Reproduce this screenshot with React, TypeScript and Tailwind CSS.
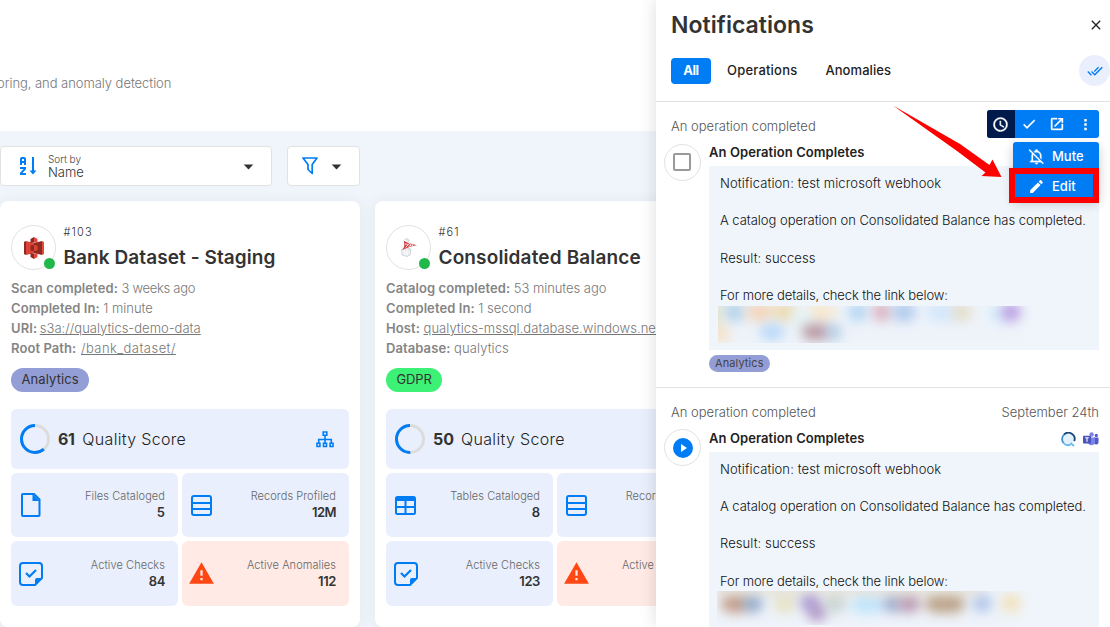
import type { ReactNode } from "react";

function Icon({ d, className, box = "0 0 24 24" }: { d: string; className: string; box?: string }) {
  return (
    <svg viewBox={box} className={`shrink-0 ${className}`} fill="currentColor">
      <path fillRule="evenodd" d={d} />
    </svg>
  );
}

const paths = {
  caret: "M7 10l5 5 5-5z",
  check: "M21 7 9 19l-5.5-5.5 1.41-1.41L9 16.17 19.59 5.59 21 7z",
  clock: "M12 20a8 8 0 0 0 8-8 8 8 0 0 0-8-8 8 8 0 0 0-8 8 8 8 0 0 0 8 8m0-18a10 10 0 0 1 10 10 10 10 0 0 1-10 10C6.47 22 2 17.5 2 12A10 10 0 0 1 12 2m.5 5v5.25l4.5 2.67-.75 1.23L11 13V7h1.5z",
  open: "M14 3v2h3.59l-9.83 9.83 1.41 1.41L19 6.41V10h2V3m-2 16H5V5h7V3H5a2 2 0 0 0-2 2v14a2 2 0 0 0 2 2h14a2 2 0 0 0 2-2v-7h-2v7z",
  dots: "M10 3h4v4h-4zM10 10h4v4h-4zM10 17h4v4h-4z",
  bellOff: "M22.11 21.46 2.39 1.73 1.11 3l4.72 4.72A6.9 6.9 0 0 0 5 11v6l-2 2v1h15.11l2.73 2.73 1.27-1.27M7 18v-7c0-.61.11-1.21.34-1.77L16.11 18H7m3 3h4a2 2 0 0 1-2 2 2 2 0 0 1-2-2M8.29 5.09c.53-.34 1.11-.59 1.71-.79V4a2 2 0 0 1 2-2 2 2 0 0 1 2 2v.29c2.97.88 5 3.61 5 6.71v4.8l-2-2V11a5 5 0 0 0-5-5c-.78 0-1.55.2-2.24.56L8.29 5.09z",
  pencil: "M20.71 7.04c.39-.39.39-1.04 0-1.41l-2.34-2.34c-.37-.39-1.02-.39-1.41 0l-1.84 1.83 3.75 3.75M3 17.25V21h3.75L17.81 9.93l-3.75-3.75L3 17.25z",
  close: "M19 6.41 17.59 5 12 10.59 6.41 5 5 6.41 10.59 12 5 17.59 6.41 19 12 13.41 17.59 19 19 17.59 13.41 12z",
  checkAll: "M.41 13.41 6 19l1.41-1.42L1.83 12m20.41-6.42L11.66 16.17 7.5 12l-1.43 1.41L11.66 19l12-12M18 7l-1.41-1.42-6.35 6.35 1.42 1.41L18 7z",
  alert: "M13 14h-2V9h2m0 9h-2v-2h2M1 21h22L12 2 1 21z",
};

function SortIcon() {
  return (
    <svg viewBox="0 0 17 18" className="h-[18px] w-[17px] shrink-0" fill="none" stroke="#007cf5" strokeWidth="2">
      <path d="M1 8V2a1 1 0 0 1 1-1h2a1 1 0 0 1 1 1v6M1 5h4" />
      <path d="M0 11h5v.8L1 16.200V17h5" strokeWidth="1.900" />
      <path d="M13 0v15" />
      <path d="M9.500 13.500h7L13 17.500z" fill="#007cf5" stroke="none" />
    </svg>
  );
}

function FilterIcon() {
  return (
    <svg viewBox="0 0 16 18" className="h-[18px] w-4 shrink-0" fill="none" stroke="#007cf5" strokeWidth="1.700">
      <path d="M1 1h14L10.200 7.500v9L6 12.500v-5z" strokeLinejoin="round" />
    </svg>
  );
}

function FileIcon() {
  return (
    <svg viewBox="0 0 20 24" className="h-6 w-5" fill="none" stroke="#007cf5" strokeWidth="2">
      <path d="M2 1h11l5.500 5.500V22a1 1 0 0 1-1 1H2a1 1 0 0 1-1-1V2a1 1 0 0 1 1-1z" strokeLinejoin="round" />
      <path d="M11.500 1v7h7z" fill="#007cf5" stroke="none" />
    </svg>
  );
}

function RowsIcon() {
  return (
    <svg viewBox="0 0 21 21" className="size-[21px]" fill="none" stroke="#007cf5" strokeWidth="2">
      <rect x="1" y="1" width="19" height="19" rx="2" />
      <path d="M1 8h19M1 14h19" />
    </svg>
  );
}

function TableIcon() {
  return (
    <svg viewBox="0 0 21 19" className="h-[19px] w-[21px]" fill="none" stroke="#007cf5" strokeWidth="2">
      <rect x="1" y="1" width="19" height="17" rx="1.500" />
      <path d="M1 11h19M10.500 4v14" />
      <path d="M1 3h19" strokeWidth="4" />
    </svg>
  );
}

function NoteCheckIcon() {
  return (
    <svg viewBox="0 0 24 24" className="size-6" fill="none" stroke="#007cf5" strokeWidth="2">
      <path d="M16 23H4a3 3 0 0 1-3-3V4a3 3 0 0 1 3-3h16a3 3 0 0 1 3 3v12z" strokeLinejoin="round" />
      <path d="M16 23v-5a2 2 0 0 1 2-2h5z" fill="#007cf5" stroke="none" />
      <path d="M7 11l3.500 3.500L17 8" strokeWidth="2.200" />
    </svg>
  );
}

function SitemapIcon() {
  return (
    <svg viewBox="0 0 18 17" className="h-[17px] w-[18px]" fill="none" stroke="#007cf5" strokeWidth="1.600">
      <path d="M7.200 1h3.600v3.300H7.200zM1 12.200h2.900v3.300H1zM7.500 12.200h3v3.300h-3zM14.100 12.200H17v3.300h-2.900zM9 4.500V12M2.700 12V8.500h12.600V12" />
    </svg>
  );
}

function S3Icon() {
  return (
    <svg viewBox="0 0 20 22" className="h-[22px] w-5">
      <path d="M0 5l2-1v14l-2-1z" fill="#8c2a20" />
      <path d="M2 4l8 2v10l-8 2z" fill="#dd4237" />
      <path d="M20 5l-2-1v14l2-1z" fill="#e04a3d" />
      <path d="M18 4l-8 2v10l8 2z" fill="#8c2a20" />
      <path d="M10 0l-3.500 2v4l3.500-.6z" fill="#8c2a20" />
      <path d="M10 0l3.500 2v4L10 5.400z" fill="#e04a3d" />
      <path d="M10 22l-3.500-2v-4l3.500.6z" fill="#8c2a20" />
      <path d="M10 22l3.500-2v-4l-3.500.6z" fill="#e04a3d" />
      <path d="M6.500 8.500L10 8v6l-3.500-.5z" fill="#8c2a20" />
      <path d="M13.500 8.500L10 8v6l3.500-.5z" fill="#dd4237" />
    </svg>
  );
}

function SqlServerIcon() {
  return (
    <svg viewBox="0 0 18 20" className="h-5 w-[18px]">
      <path d="M4.500 1.500l3-1 1.500 2v2M1.500 11.500L6 9.500l5 1.500-1 6-3 1.500-5-1.500z" fill="#e3e8eb" stroke="#c3ccd2" strokeWidth=".7" />
      <path d="M2 14h8M3 16h6M4 11.500l1 5M7 10.500v7" stroke="#fff" strokeWidth=".8" />
      <path d="M3.500 2.500c3 2 8.500 3.700 13.500 4.700-4 .6-9 2-15 4.800 2.500-3 3-5 1.500-9.500z" fill="#d23f44" />
      <path d="M5 6l3.500.5L5.500 9.500M8.500 5l3 2-3 1.500M12.500 6.500v1.500" fill="none" stroke="#fff" strokeWidth=".8" />
    </svg>
  );
}

function TeamsIcon() {
  return (
    <svg viewBox="0 0 16 15" className="h-[15px] w-4">
      <circle cx="13.300" cy="3.400" r="1.600" fill="#5059c9" />
      <circle cx="8.600" cy="2.500" r="2.200" fill="#7b83eb" />
      <path d="M11 5.500h4.500v5a2.400 2.400 0 0 1-4.500.8z" fill="#5059c9" />
      <path d="M5 5.500h7v5a3.600 3.600 0 0 1-7 0z" fill="#7b83eb" />
      <rect x="0" y="3.700" width="8" height="7.800" rx=".7" fill="#4b53bc" />
      <path d="M2.200 5.800h3.600M4 5.800v4" stroke="#fff" strokeWidth="1.100" />
    </svg>
  );
}

function QLogo() {
  return (
    <svg viewBox="0 0 15 15" className="size-[15px]" fill="none">
      <circle cx="7.500" cy="7" r="5.500" fill="#e3f1fc" />
      <path d="M2.500 11A6.200 6.200 0 0 1 3 2.600" stroke="#3f8fd0" strokeWidth="1.800" />
      <path d="M3 2.600a6.200 6.200 0 0 1 10.200 6.600" stroke="#174a78" strokeWidth="1.800" />
      <path d="M2.500 11a6.200 6.200 0 0 0 7 1.700M9.500 11l3.500 3" stroke="#6bb8ee" strokeWidth="1.900" />
    </svg>
  );
}

function Tile({ icon, label, value, track = "", alert = false }: { icon: ReactNode; label: string; value: string; track?: string; alert?: boolean }) {
  return (
    <div className={`flex items-center justify-between rounded-md pr-[13px] ${alert ? "bg-[#ffeae5] pl-[6px]" : "bg-[#e9effc] pl-[6.500px]"}`}>
      <div className="flex w-[26px] justify-center">{icon}</div>
      <div className="pb-[2px] text-right">
        <div className="whitespace-nowrap text-[11px] font-light leading-4 tracking-[0.070px] text-[#666]">{label}</div>
        <div className={`text-[13px] font-semibold leading-4 text-[#333] ${track}`}>{value}</div>
      </div>
    </div>
  );
}

function Detail({ label, children, link }: { label: string; children: string; link?: string }) {
  return (
    <div className="whitespace-nowrap">
      <span className="font-semibold tracking-[0.080px] text-[#858585]">{label}</span>{" "}
      <span className={`font-light text-[#777] ${link ?? "tracking-[-0.050px]"}`}>{children}</span>
    </div>
  );
}

type CardProps = {
  logo: ReactNode;
  id: string;
  name: string;
  nameTrack: string;
  details: ReactNode;
  tag: string;
  tagClass: string;
  score: number;
  scoreClass: string;
  first: ReactNode;
  checks: string;
};

function DatastoreCard(p: CardProps) {
  const c = 2 * Math.PI * 13.5;
  return (
    <div className="flex h-[426px] w-[360px] shrink-0 flex-col rounded-lg bg-white px-[11px] pt-6 shadow-[0_1px_14px_rgba(60,90,130,0.08)]">
      <div className="flex h-[46px] gap-[7.500px]">
        <div className="relative flex size-[45px] shrink-0 items-center justify-center rounded-full border border-[#e2e2e2]">
          {p.logo}
          <span className="absolute bottom-0 right-0 size-[11px] rounded-full bg-[#21b84b]" />
        </div>
        <div>
          <div className="h-[14px] text-[11px] font-light leading-[14px] tracking-[1.100px] text-[#333]">{p.id}</div>
          <div className={`mt-[6px] whitespace-nowrap text-[19px] font-semibold leading-[25px] text-[#333] ${p.nameTrack}`}>{p.name}</div>
        </div>
      </div>
      <div className="mt-[7px] text-[13px] leading-5">{p.details}</div>
      <div className={`mt-[10px] flex h-6 w-fit items-center rounded-full px-[10.500px] text-[13px] text-[#333] ${p.tagClass}`}>{p.tag}</div>
      <div className="mt-[17px] flex h-[60px] items-center rounded-md bg-[#e9effc] pl-2 pr-[15.500px]">
        <svg viewBox="0 0 32 32" className="size-8" fill="none" strokeWidth="3">
          <circle cx="16" cy="16" r="13.500" stroke="#dcdcdc" />
          <circle cx="16" cy="16" r="13.500" stroke="#007cf5" strokeDasharray={`${(c * p.score) / 100} ${c}`} transform="matrix(0 -1 -1 0 32 32)" />
        </svg>
        <span className={`text-[16px] font-bold text-[#333] ${p.scoreClass}`}>{p.score}</span>
        <span className="flex-1 text-[16px] font-light tracking-[0.330px] text-[#222]">Quality Score</span>
        <SitemapIcon />
      </div>
      <div className="mt-1 grid grid-cols-2 grid-rows-[64px_65px] gap-1">
        {p.first}
        <Tile icon={<RowsIcon />} label="Records Profiled" value="12M" track="tracking-[-0.500px]" />
        <Tile icon={<NoteCheckIcon />} label="Active Checks" value={p.checks} track="tracking-[-0.400px]" />
        <Tile alert icon={<Icon d={paths.alert} className="size-[27px] text-[#ff4713]" />} label="Active Anomalies" value="112" track="tracking-[-0.400px]" />
      </div>
    </div>
  );
}

const blurOne = [
  "left-[4px] -top-1 w-6 h-5 bg-[#a9cfe8]", "left-[28px] -top-1 w-7 h-5 bg-[#f5cfae]", "left-[54px] -top-1 w-6 h-5 bg-[#ecd6a2]",
  "left-[90px] -top-1 w-7 h-5 bg-[#f9e6c4]", "left-[74px] top-1 w-5 h-5 bg-[#dff3f3]", "left-[130px] -top-1 w-5 h-5 bg-[#a8d0f3]", "left-[154px] -top-1 w-5 h-5 bg-[#d7a5b4]",
  "left-[174px] -top-1 w-6 h-5 bg-[#a3c2ea]", "left-[208px] -top-1 w-8 h-5 bg-[#cfe5fb]", "left-[234px] -top-1 w-5 h-5 bg-[#e3d9bd]",
  "left-[270px] top-0 w-5 h-4 bg-[#cdeafa]", "left-[283px] -top-1 w-5 h-5 bg-[#b08add]", "-left-2 top-[18px] w-5 h-5 bg-[#f9dfc0]", "left-[42px] top-[18px] w-6 h-4 bg-[#a9d2f8]",
  "left-[84px] top-[18px] w-7 h-4 bg-[#ab828c]", "left-[108px] top-[18px] w-4 h-4 bg-[#a2c6e4]", "-left-2 -top-2 w-3 h-8 bg-[#e3dfbf]",
];
const blurTwo = [
  "left-[4px] top-[2px] w-7 h-5 bg-[#b98a72]", "left-[26px] top-[2px] w-5 h-5 bg-[#7f9cc4]", "left-[56px] top-[2px] w-6 h-5 bg-[#e4dfba]",
  "left-[83px] top-0 w-5 h-5 bg-[#9a85cf]", "left-[90px] top-[11px] w-5 h-5 bg-[#a887be]", "left-[106px] top-[2px] w-6 h-5 bg-[#c2cfc8]",
  "left-[134px] top-[3px] w-8 h-5 bg-[#b7e2fb]", "left-[165px] top-[2px] w-5 h-5 bg-[#8ea2cb]", "left-[180px] top-[2px] w-6 h-5 bg-[#b08aa2]",
  "left-[208px] top-[2px] w-10 h-5 bg-[#b0916f]", "left-[255px] top-[2px] w-5 h-5 bg-[#a5bde6]", "left-[284px] top-[2px] w-5 h-5 bg-[#f3deb0]",
  "-left-1 -top-2 w-[270px] h-3 bg-[#e3ddcf]",
];

function Redacted({ spots, className }: { spots: string[]; className: string }) {
  return (
    <div className={`relative overflow-hidden bg-linear-to-r from-[#eef3fa] from-90% to-[#eff5fa] ${className}`}>
      {spots.map((s) => (
        <span key={s} className={`absolute rounded-full opacity-80 blur-[6px] ${s}`} />
      ))}
    </div>
  );
}

function Message({ children, className }: { children: ReactNode; className: string }) {
  return (
    <div className={`h-[184px] bg-[#eff5fa] pl-[11px] text-[13px] font-light leading-[18.700px] text-[#111] ${className}`}>
      <p className="mb-[18.700px] tracking-[0.110px]">Notification: test microsoft webhook</p>
      <p className="mb-[18.700px] whitespace-nowrap tracking-[-0.030px]">A catalog operation on Consolidated Balance has completed.</p>
      <p className="mb-[18.700px] tracking-[0.080px]">Result: success</p>
      <p className="tracking-[-0.100px]">For more details, check the link below:</p>
      {children}
    </div>
  );
}

function Notification({ date, avatar, badges, children, tag, avatarClass, messageClass }: { date?: string; avatar: ReactNode; badges?: ReactNode; children: ReactNode; tag?: string; avatarClass: string; messageClass: string }) {
  return (
    <div className="h-[286px] border-b border-[#e2e2e2] pl-2 pr-[11px] pt-[14px]">
      <div className="flex h-[21px] justify-between pl-[7px] text-[13px] font-light leading-5 text-[#555]">
        <span>An operation completed</span>
        <span>{date}</span>
      </div>
      <div className="flex gap-2">
        <div className={`flex size-[37px] shrink-0 items-center justify-center rounded-full border border-[#e2e2e2] ${avatarClass}`}>{avatar}</div>
        <div className="flex-1">
          <div className="mb-[3px] mt-[6px] flex h-5 items-center justify-between">
            <span className="text-[13px] font-semibold tracking-[0.080px] text-[#222]">An Operation Completes</span>
            <span className="flex gap-[7px]">{badges}</span>
          </div>
          <Message className={messageClass}>{children}</Message>
          {tag && <div className="mt-[5px] flex h-[17px] w-fit items-center rounded-full bg-[#939dd6] px-[6px] text-[11px] tracking-[0.100px] text-[#444]">{tag}</div>}
        </div>
      </div>
    </div>
  );
}

export default function App() {
  return (
    <div className="relative h-[627px] w-[1110px] overflow-hidden bg-[#eff5fa] font-['Inter',sans-serif]">
      <div className="flex h-[131px] items-center bg-white pt-[36px]">
        <span className="-ml-[3px] text-[13px] font-light tracking-[-0.050px] text-[#777]">oring, and anomaly detection</span>
      </div>
      <div className="flex gap-[15px] pt-[15px]">
        <div className="flex h-10 w-[272px] items-center rounded border border-[#e2e2e2] bg-white pl-[19px] pr-[11px]">
          <SortIcon />
          <div className="ml-[11px] flex-1 pb-px text-[#333]">
            <div className="text-[10px] font-light leading-3 tracking-[-0.040px] text-[#444]">Sort by</div>
            <div className="text-[13px] font-light leading-[14px]">Name</div>
          </div>
          <Icon d={paths.caret} className="size-[23px] text-[#333]" />
        </div>
        <div className="flex h-10 w-[73px] items-center rounded border border-[#e2e2e2] bg-white pl-[14px]">
          <FilterIcon />
          <Icon d={paths.caret} className="ml-[7px] size-[23px] text-[#333]" />
        </div>
      </div>
      <div className="flex gap-[15px] pt-[15px]">
        <DatastoreCard
          logo={<S3Icon />}
          id="#103"
          name="Bank Dataset - Staging"
          nameTrack="tracking-[0.080px]"
          details={
            <>
              <Detail label="Scan completed:" link="tracking-[-0.300px]">3 weeks ago</Detail>
              <Detail label="Completed In:">1 minute</Detail>
              <Detail label="URI:" link="underline tracking-[0.010px] -ml-px">s3a://qualytics-demo-data</Detail>
              <Detail label="Root Path:" link="underline tracking-[0.450px] ml-px">/bank_dataset/</Detail>
            </>
          }
          tag="Analytics"
          tagClass="bg-[#939dd6] tracking-[0.100px]"
          score={61}
          scoreClass="ml-[7px] mr-2 tracking-[-0.500px]"
          first={<Tile icon={<FileIcon />} label="Files Cataloged" value="5" />}
          checks="84"
        />
        <DatastoreCard
          logo={<SqlServerIcon />}
          id="#61"
          name="Consolidated Balance"
          nameTrack="tracking-[0.140px]"
          details={
            <>
              <Detail label="Catalog completed:">53 minutes ago</Detail>
              <Detail label="Completed In:">1 second</Detail>
              <Detail label="Host:" link="underline tracking-[0.040px]">qualytics-mssql.database.windows.net</Detail>
              <Detail label="Database:" link="tracking-[0.100px]">qualytics</Detail>
            </>
          }
          tag="GDPR"
          tagClass="bg-[#3df176] tracking-[-0.150px]"
          score={50}
          scoreClass="ml-[7px] mr-[7px]"
          first={<Tile icon={<TableIcon />} label="Tables Cataloged" value="8" />}
          checks="123"
        />
      </div>

      <aside className="absolute right-0 top-0 h-[627px] w-[454px] overflow-hidden bg-white shadow-[0_0_16px_rgba(0,0,0,0.14)]">
        <div className="h-[102px] border-b border-[#e2e2e2] pl-[15px]">
          <div className="flex h-[50px] items-center justify-between pr-[6px]">
            <h1 className="text-[23px] font-semibold tracking-[0.040px] text-[#333]">Notifications</h1>
            <Icon d={paths.close} className="size-4 text-[#222]" />
          </div>
          <div className="flex h-[41px] items-center text-[13px] font-medium text-[#222]">
            <span className="flex h-[26px] w-10 items-center justify-center rounded bg-[#007cf5] font-bold tracking-[-0.500px] text-white">All</span>
            <span className="ml-4 pt-px tracking-[0.200px]">Operations</span>
            <span className="ml-[28px] flex-1 pt-px tracking-[0.080px]">Anomalies</span>
            <span className="flex size-[31px] items-center justify-center rounded-full bg-[#e9effc]">
              <Icon d={paths.checkAll} className="size-4 text-[#007cf5]" />
            </span>
          </div>
        </div>
        <Notification
          tag="Analytics"
          avatarClass="mt-[7px]"
          messageClass="pt-[8px]"
          avatar={<span className="mr-px mb-px size-[18px] rounded-[2px] border-2 border-[#9a9a9a]" />}
        >
          <Redacted spots={blurOne} className="-ml-[2px] mt-px h-[37px] w-[322px]" />
        </Notification>
        <Notification
          date="September 24th"
          avatarClass="mt-[6px]"
          messageClass="pt-[7.500px]"
          avatar={
            <svg viewBox="0 0 20 20" className="size-5">
              <circle cx="10" cy="10" r="10" fill="#007cf5" />
              <path d="M8 6v8l6-4z" fill="#fff" />
            </svg>
          }
          badges={
            <>
              <QLogo />
              <TeamsIcon />
            </>
          }
        >
          <Redacted spots={blurTwo} className="-ml-[3px] mt-px h-[34px] w-[312px]" />
        </Notification>
      </aside>

      <div className="absolute left-[987px] top-[110px] flex h-7 w-[112px] overflow-hidden rounded-[3px] bg-[#007cf5] text-white">
        <span className="flex w-7 items-center justify-center bg-[#001a4b] pr-px"><Icon d={paths.clock} className="size-[17px] stroke-current stroke-[0.6]" /></span>
        <span className="flex w-7 items-center justify-center"><Icon d={paths.check} className="size-4 stroke-current stroke-[0.6]" /></span>
        <span className="flex w-7 items-center justify-center"><Icon d={paths.open} className="size-4 stroke-current stroke-[0.6]" /></span>
        <span className="flex w-7 items-center justify-center"><Icon d={paths.dots} className="size-[15px]" /></span>
      </div>
      <div className="absolute left-[1013px] top-[142px] h-[57px] w-[86px] rounded-[3px] bg-[#007cf5] text-[13px] font-medium text-white shadow-[0_4px_12px_rgba(0,0,0,0.2)]">
        <div className="flex h-[29px] items-center gap-[7px] pl-[15px]"><Icon d={paths.bellOff} className="size-[17px] stroke-current stroke-[0.4]" />Mute</div>
        <div className="flex h-[31px] items-center gap-[7px] pl-[15px]"><Icon d={paths.pencil} className="size-[17px]" />Edit</div>
      </div>
      <div className="absolute left-[1009px] top-[168px] h-[35px] w-[90px] border-[6px] border-[#fe0000]" />
      <svg viewBox="0 0 110 74" className="absolute left-[893px] top-[105px] h-[74px] w-[110px]">
        <path d="M0 .5L67 39 96.500 60 99.500 54.500 108.500 72 88.500 71 92.500 67.500 64 46z" fill="#fe0000" />
      </svg>
    </div>
  );
}
